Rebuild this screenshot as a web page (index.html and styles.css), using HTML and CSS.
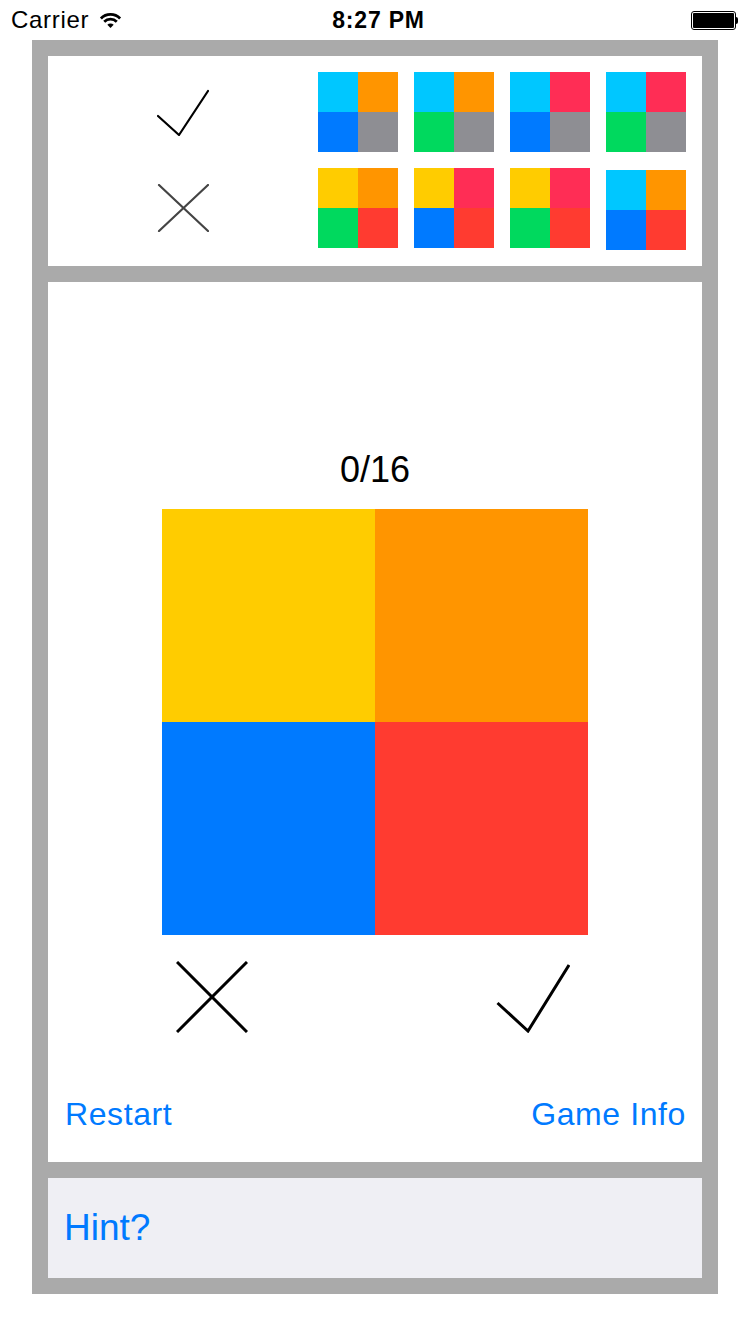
FILE: index.html
```html
<!DOCTYPE html>
<html lang="en">
<head>
    <meta charset="UTF-8">
    <meta name="viewport" content="width=device-width, initial-scale=1.0">
    <title>Color Match</title>
    <link rel="stylesheet" href="styles.css">
</head>
<body>
    <div class="status-bar">
        <div class="carrier">
            <span>Carrier</span>
            <svg class="wifi" width="25" height="15" viewBox="0 0 25 16">
                <path d="M2.25 5.75 A14.5 14.5 0 0 1 22.75 5.75" fill="none" stroke="#000" stroke-width="3"/>
                <path d="M5.8 9.3 A9.5 9.5 0 0 1 19.2 9.3" fill="none" stroke="#000" stroke-width="3"/>
                <path d="M12.5 16 L9.1 12.6 A4.8 4.8 0 0 1 15.9 12.6 Z" fill="#000"/>
            </svg>
        </div>
        <div class="clock">8:27 PM</div>
        <div class="battery-wrap">
            <div class="battery"><div class="battery-fill"></div></div>
            <div class="battery-nub"></div>
        </div>
    </div>

    <div class="frame">
        <!-- history of answers -->
        <div class="panel history">
            <div class="marks">
                <div class="mark-row">
                    <svg width="52" height="48" viewBox="0 0 52 48">
                        <polyline points="1,28 22,47 51,3" fill="none" stroke="#000" stroke-width="2.2" stroke-linecap="round" stroke-linejoin="round"/>
                    </svg>
                </div>
                <div class="mark-row">
                    <svg width="52" height="48" viewBox="0 0 52 48">
                        <line x1="2" y1="1" x2="51" y2="47" stroke="#444" stroke-width="2.2" stroke-linecap="round"/>
                        <line x1="51" y1="1" x2="2" y2="47" stroke="#444" stroke-width="2.2" stroke-linecap="round"/>
                    </svg>
                </div>
            </div>
            <div class="tiles">
                <div class="tile"><i class="cyan"></i><i class="orange"></i><i class="blue"></i><i class="gray"></i></div>
                <div class="tile"><i class="cyan"></i><i class="orange"></i><i class="green"></i><i class="gray"></i></div>
                <div class="tile"><i class="cyan"></i><i class="pink"></i><i class="blue"></i><i class="gray"></i></div>
                <div class="tile"><i class="cyan"></i><i class="pink"></i><i class="green"></i><i class="gray"></i></div>
                <div class="tile"><i class="yellow"></i><i class="orange"></i><i class="green"></i><i class="red"></i></div>
                <div class="tile"><i class="yellow"></i><i class="pink"></i><i class="blue"></i><i class="red"></i></div>
                <div class="tile"><i class="yellow"></i><i class="pink"></i><i class="green"></i><i class="red"></i></div>
                <div class="tile tile-low"><i class="cyan"></i><i class="orange"></i><i class="blue"></i><i class="red"></i></div>
            </div>
        </div>

        <!-- current card -->
        <div class="panel game">
            <div class="count">0/16</div>
            <div class="card">
                <i class="yellow"></i><i class="orange"></i><i class="blue"></i><i class="red"></i>
            </div>
            <div class="answer-row">
                <svg width="72" height="72" viewBox="0 0 72 72">
                    <line x1="1" y1="1" x2="71" y2="71" stroke="#000" stroke-width="3"/>
                    <line x1="71" y1="1" x2="1" y2="71" stroke="#000" stroke-width="3"/>
                </svg>
                <svg width="74" height="72" viewBox="0 0 74 72">
                    <polyline points="1.5,42 32,70 73,4" fill="none" stroke="#000" stroke-width="3"/>
                </svg>
            </div>
            <div class="links">
                <a class="link">Restart</a>
                <a class="link">Game Info</a>
            </div>
        </div>

        <div class="panel hint">
            <a class="link hint-link">Hint?</a>
        </div>
    </div>
</body>
</html>
```

FILE: styles.css
```css
body {
    margin: 0;
    background: white;
    font-family: "Liberation Sans", Arial, sans-serif;
    color: #000;
}

.status-bar {
    display: grid;
    grid-template-columns: 1fr auto 1fr;
    align-items: center;
    height: 40px;
    padding: 0 12px 0 11px;
}

.carrier {
    display: flex;
    align-items: center;
    gap: 9px;
    font-size: 24px;
    line-height: 40px;
    letter-spacing: 0.7px;
}

.wifi {
    margin-top: 1px;
}

.clock {
    font-size: 23px;
    font-weight: bold;
    line-height: 40px;
    letter-spacing: 0.8px;
    padding-left: 8px;
}

.battery-wrap {
    display: flex;
    align-items: center;
    justify-content: flex-end;
}

.battery {
    width: 41px;
    height: 15px;
    border: 1.5px solid #000;
    border-radius: 3px;
    padding: 1px;
}

.battery-fill {
    width: 100%;
    height: 100%;
    background: #000;
    border-radius: 1px;
}

.battery-nub {
    width: 2px;
    height: 7px;
    background: #000;
    border-radius: 0 2px 2px 0;
}

.frame {
    margin: 0 32px;
    padding: 16px;
    background: #aaaaaa;
    display: flex;
    flex-direction: column;
    gap: 16px;
}

.panel {
    background: white;
}

.history {
    height: 210px;
    display: grid;
    grid-template-columns: 270px 1fr;
}

.marks {
    display: flex;
    flex-direction: column;
    gap: 16px;
    padding-top: 16px;
}

.mark-row {
    height: 80px;
    display: flex;
    align-items: center;
    justify-content: center;
}

.tiles {
    display: grid;
    grid-template-columns: repeat(4, 80px);
    grid-auto-rows: 80px;
    gap: 16px;
    padding-top: 16px;
    align-content: start;
}

.tile {
    display: grid;
    grid-template-columns: 1fr 1fr;
    grid-template-rows: 1fr 1fr;
}

.tile-low {
    margin-top: 2px;
    margin-bottom: -2px;
}

.cyan { background: #00c7ff; }
.orange { background: #ff9500; }
.blue { background: #007aff; }
.gray { background: #8e8e93; }
.green { background: #00d95e; }
.pink { background: #ff2d55; }
.yellow { background: #ffcc00; }
.red { background: #ff3b30; }

.game {
    display: flex;
    flex-direction: column;
    align-items: center;
    padding: 170px 0 32px;
}

.count {
    font-size: 36px;
    line-height: 36px;
    margin-bottom: 21px;
}

.card {
    width: 426px;
    height: 426px;
    display: grid;
    grid-template-columns: 1fr 1fr;
    grid-template-rows: 1fr 1fr;
}

.answer-row {
    width: 426px;
    box-sizing: border-box;
    display: flex;
    justify-content: space-between;
    padding: 0 18px 0 14px;
    margin-top: 26px;
    height: 72px;
}

.links {
    align-self: stretch;
    display: flex;
    justify-content: space-between;
    padding: 0 16px 0 17px;
    margin-top: 65px;
}

.link {
    color: #007aff;
    font-size: 32px;
    line-height: 32px;
    letter-spacing: 0.6px;
    cursor: pointer;
}

.hint {
    height: 100px;
    background: #efeff4;
    display: flex;
    align-items: center;
    padding-left: 16px;
}

.hint-link {
    font-size: 37px;
    line-height: 100px;
    letter-spacing: 0;
}
```
